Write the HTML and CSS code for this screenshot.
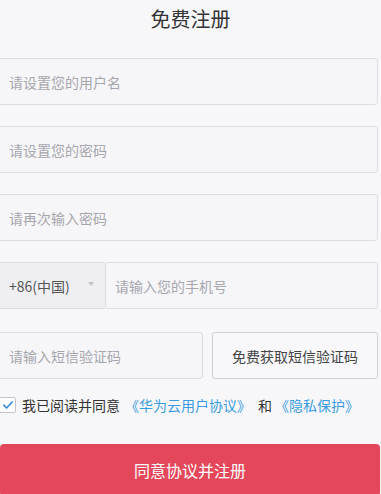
FILE: index.html
```html
<!DOCTYPE html>
<html lang="zh-CN">
<head>
<meta charset="utf-8">
<link rel="stylesheet" href="styles.css">
</head>
<body>
<div class="page">
  <h1 class="title">免费注册</h1>
  <div class="form">
    <div class="field"><span class="ph">请设置您的用户名</span></div>
    <div class="field"><span class="ph">请设置您的密码</span></div>
    <div class="field"><span class="ph">请再次输入密码</span></div>
    <div class="phone-row">
      <div class="country"><span class="cc">+86(中国)</span><span class="arrow"></span></div>
      <div class="field phone"><span class="ph">请输入您的手机号</span></div>
    </div>
    <div class="code-row">
      <div class="field code"><span class="ph">请输入短信验证码</span></div>
      <div class="send">免费获取短信验证码</div>
    </div>
    <div class="agree">
      <span class="box"><svg width="12" height="12" viewBox="0 0 12 12"><path d="M1.8 6.2 L4.6 9 L10.2 3" fill="none" stroke="#3b8fd9" stroke-width="1.7" stroke-linecap="round" stroke-linejoin="round"/></svg></span>
      <span class="txt">我已阅读并同意</span>
      <a class="link">《华为云用户协议》</a>
      <span class="and">和</span>
      <a class="link">《隐私保护》</a>
    </div>
    <div class="submit">同意协议并注册</div>
  </div>
</div>
</body>
</html>
```
FILE: styles.css
```css
html, body {
  margin: 0;
  padding: 0;
  background: #f7f7fa;
  font-family: "Noto Sans CJK SC", "Liberation Sans", sans-serif;
  overflow: hidden;
}
.page {
  width: 381px;
  height: 494px;
  overflow: hidden;
}
.title {
  margin: 0;
  padding-top: 5px;
  font-size: 20px;
  line-height: 28px;
  font-weight: normal;
  color: #333;
  text-align: center;
}
.form {
  margin-left: -3px;
  width: 381px;
  margin-top: 25px;
  display: flex;
  flex-direction: column;
}
.field {
  box-sizing: border-box;
  height: 47px;
  border: 1px solid #dcdce2;
  border-radius: 3px;
  background: #f6f6f9;
  display: flex;
  align-items: center;
  padding-left: 11px;
  margin-bottom: 21px;
}
.ph {
  font-size: 14px;
  color: #a6a6ad;
}
.phone-row {
  display: flex;
  height: 47px;
  margin-bottom: 23px;
}
.country {
  box-sizing: border-box;
  width: 108px;
  height: 47px;
  background: #efeff3;
  border: 1px solid #dcdce2;
  border-right: none;
  border-radius: 3px 0 0 3px;
  display: flex;
  align-items: center;
  padding-left: 11px;
}
.cc {
  font-size: 14px;
  color: #555;
}
.arrow {
  margin-left: 18px;
  width: 0;
  height: 0;
  border-left: 3px solid transparent;
  border-right: 3px solid transparent;
  border-top: 4px solid #c4c4c8;
  margin-top: -3px;
}
.phone {
  flex: 1;
  margin-bottom: 0;
  padding-left: 9px;
}
.code-row {
  display: flex;
  gap: 9px;
  height: 47px;
}
.code {
  width: 206px;
  margin-bottom: 0;
}
.send {
  box-sizing: border-box;
  flex: 1;
  height: 47px;
  border: 1px solid #cfcfd5;
  border-radius: 3px;
  background: #f8f8fb;
  display: flex;
  align-items: center;
  justify-content: center;
  font-size: 14px;
  color: #444;
}
.agree {
  display: flex;
  align-items: center;
  height: 20px;
  margin-top: 16px;
  font-size: 14px;
  color: #333;
}
.box {
  box-sizing: border-box;
  width: 17px;
  height: 16px;
  margin-left: 2px;
  border: 1px solid #c4c4cc;
  border-radius: 2px;
  background: #fff;
  display: flex;
  align-items: center;
  justify-content: center;
  margin-right: 6px;
}
.txt {
  margin-right: 5px;
}
.link {
  color: #3a9be0;
}
.and {
  margin: 0 3px 0 7px;
}
.submit {
  margin-top: 29px;
  height: 52px;
  background: #e5475a;
  border-radius: 4px;
  color: #fff;
  font-size: 16px;
  display: flex;
  align-items: center;
  justify-content: center;
  width: 380px;
  margin-left: 3px;
}
```
